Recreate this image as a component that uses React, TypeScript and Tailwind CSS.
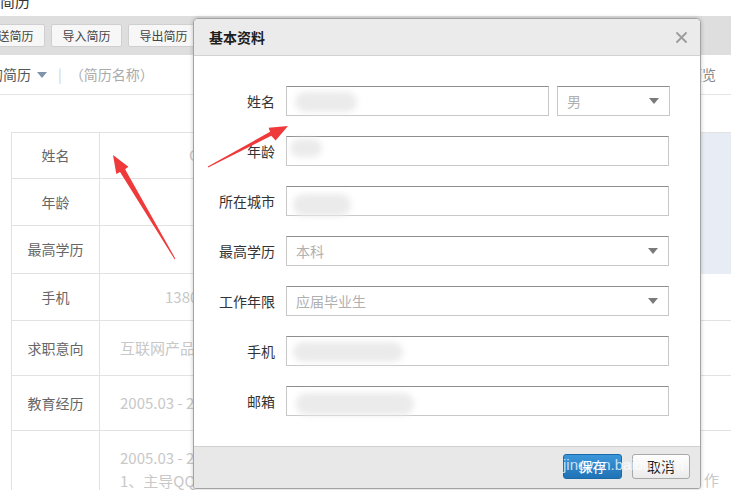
import React from "react";

const cjk = "font-['Microsoft_YaHei','Noto_Sans_CJK_SC',sans-serif]";

function Caret() {
  return (
    <svg width="10" height="6" viewBox="0 0 10 6" className="shrink-0">
      <path d="M0 0h10L5 6z" fill="#7a7a7a" />
    </svg>
  );
}

function Smudge({ className }: { className: string }) {
  return <div className={`absolute rounded-full bg-[#ebebeb] blur-[3px] ${className}`} />;
}

function Field({ children, className = "" }: { children?: React.ReactNode; className?: string }) {
  return (
    <div
      className={`relative h-[30px] border border-[#c8c8c8] border-t-[#8e8e8e] bg-white flex items-center ${className}`}
    >
      {children}
    </div>
  );
}

function SelectField({ value, className = "" }: { value: string; className?: string }) {
  return (
    <Field className={`pl-[9px] pr-[10px] justify-between ${className}`}>
      <span className="text-[14px] text-[#b0b0b0]">{value}</span>
      <Caret />
    </Field>
  );
}

function Row({ label, children }: { label: string; children: React.ReactNode }) {
  return (
    <div className="flex items-center h-[30px]">
      <div className="w-[81px] shrink-0 text-right text-[14px] text-[#333]">{label}</div>
      <div className="ml-[11px] flex-1 flex gap-[8px]">{children}</div>
    </div>
  );
}

const tableRows: { label: string; value?: string; pad?: string; h: string }[] = [
  { label: "姓名", value: "Chen", pad: "pl-[89px]", h: "h-[46px]" },
  { label: "年龄", h: "h-[47px]" },
  { label: "最高学历", h: "h-[48px]" },
  { label: "手机", value: "13800000000", pad: "pl-[65px]", h: "h-[47px]" },
  { label: "求职意向", value: "互联网产品经理", pad: "pl-[20px]", h: "h-[55px]" },
  { label: "教育经历", value: "2005.03 - 2009.06 北京大学", pad: "pl-[20px]", h: "h-[55px]" },
];

export default function App() {
  return (
    <div className={`relative w-[731px] h-[490px] overflow-hidden bg-white ${cjk}`}>
      {/* page heading, scrolled partly out of view */}
      <div className="h-[16px] overflow-hidden">
        <div className="-mt-[9px] text-[15px] leading-[20px] text-[#333]">简历</div>
      </div>

      {/* toolbar */}
      <div className="h-[39px] bg-[#dedede] flex items-start pt-[8px] gap-[6px] -ml-[26px]">
        {["发送简历", "导入简历", "导出简历", "打印简历"].map((t) => (
          <div
            key={t}
            className="w-[71px] h-[23px] flex items-center justify-center rounded-[2px] border border-[#cfcfcf] bg-[#f7f7f7] text-[12px] text-[#444]"
          >
            {t}
          </div>
        ))}
      </div>

      {/* resume switcher */}
      <div className="h-[40px] border-b border-[#e4e4e4] flex items-center text-[14px]">
        <span className="-ml-[25px] text-[#555]">我的简历</span>
        <svg width="10" height="6" viewBox="0 0 10 6" className="ml-[6px]">
          <path d="M0 0h10L5 6z" fill="#7f93ab" />
        </svg>
        <span className="ml-[11px] text-[#d0d0d0]">|</span>
        <span className="ml-[8px] text-[#aaa]">（简历名称）</span>
        <span className="ml-auto mr-[15px] text-[#888]">预览</span>
      </div>

      {/* resume table */}
      <div className="mt-[37px] ml-[11px] w-[760px] border-t border-l border-[#e2e2e2] flex">
        <div className="w-[689px] shrink-0">
          {tableRows.map((r) => (
            <div key={r.label} className={`flex border-b border-[#e2e2e2] ${r.h}`}>
              <div className="w-[88px] shrink-0 border-r border-[#e2e2e2] flex items-center justify-center text-[14px] text-[#666]">
                {r.label}
              </div>
              <div className={`flex-1 flex items-center text-[15px] text-[#c8c8c8] ${r.pad ?? ""}`}>
                {r.value}
              </div>
            </div>
          ))}
          <div className="flex h-[70px]">
            <div className="w-[88px] shrink-0 border-r border-[#e2e2e2]" />
            <div className="flex-1 pl-[20px] pt-[15px] text-[15px] leading-[23px] text-[#c8c8c8]">
              <div>2005.03 - 2009.06</div>
              <div>1、主导QQ空间产品改版</div>
            </div>
          </div>
        </div>
        <div className="flex-1">
          <div className="h-[141px] bg-[#e8ecf4]" />
          <div className="h-[47px] border-b border-[#e2e2e2]" />
          <div className="h-[55px] border-b border-[#e2e2e2]" />
          <div className="h-[55px] border-b border-[#e2e2e2]" />
          <div className="pt-[38px] pl-[3px] text-[15px] text-[#c8c8c8]">作</div>
        </div>
      </div>

      {/* 基本资料 dialog */}
      <div className="absolute left-[193px] top-[18px] w-[508px] h-[471px] flex flex-col border border-[#a3a3a3] rounded-t-[5px] rounded-b-[3px] bg-white shadow-[0_0_4px_rgba(0,0,0,0.22)] overflow-hidden">
        <div className="h-[37px] shrink-0 bg-[#ebebeb] border-b border-[#d2d2d2] flex items-center pl-[15px] pr-[13px]">
          <span className="text-[14px] font-bold text-[#1e1e1e]">基本资料</span>
          <svg width="11" height="11" viewBox="0 0 11 11" className="ml-auto">
            <path d="M1 1l9 9M10 1l-9 9" stroke="#9c9c9c" strokeWidth="1.8" strokeLinecap="round" />
          </svg>
        </div>

        <div className="flex-1 flex flex-col gap-[20px] pt-[30px] pr-[31px]">
          <Row label="姓名">
            <Field className="w-[263px]">
              <Smudge className="left-[8px] top-[5px] w-[62px] h-[20px]" />
            </Field>
            <SelectField value="男" className="w-[113px]" />
          </Row>
          <Row label="年龄">
            <Field className="flex-1">
              <Smudge className="left-[3px] top-[2px] w-[32px] h-[18px]" />
            </Field>
          </Row>
          <Row label="所在城市">
            <Field className="flex-1">
              <Smudge className="left-[6px] top-[7px] w-[58px] h-[22px]" />
            </Field>
          </Row>
          <Row label="最高学历">
            <SelectField value="本科" className="flex-1" />
          </Row>
          <Row label="工作年限">
            <SelectField value="应届毕业生" className="flex-1" />
          </Row>
          <Row label="手机">
            <Field className="flex-1">
              <Smudge className="left-[6px] top-[5px] w-[110px] h-[20px]" />
            </Field>
          </Row>
          <Row label="邮箱">
            <Field className="flex-1">
              <Smudge className="left-[9px] top-[6px] w-[118px] h-[22px]" />
            </Field>
          </Row>
        </div>

        <div className="h-[42px] shrink-0 bg-[#e8e8e8] border-t border-[#d0d0d0] flex justify-end items-start pt-[7px] pr-[10px] gap-[10px]">
          <div className="w-[59px] h-[25px] rounded-[3px] border border-[#1b69a6] bg-gradient-to-b from-[#3b97da] to-[#1f73b6] flex items-center justify-center text-[14px] text-white">
            保存
          </div>
          <div className="w-[58px] h-[25px] rounded-[3px] border border-[#a9a9a9] bg-gradient-to-b from-white to-[#ebebeb] flex items-center justify-center text-[14px] text-[#222]">
            取消
          </div>
        </div>
      </div>

      {/* site watermark */}
      <div className="absolute left-[563px] top-[455px] text-[15px] leading-[20px] text-white/75 font-['Liberation_Sans',sans-serif] pointer-events-none">
        jingyan.baidu.com
      </div>

      {/* red annotation arrows */}
      <svg className="absolute inset-0 pointer-events-none" width="731" height="490" viewBox="0 0 731 490">
        <polygon
          points="175.4,258.7 125.1,169.2 128.4,166.7 113,155 116.3,174.1 120.0,172.0 174.6,259.3"
          fill="#ee3a3a"
        />
        <polygon
          points="208.2,167.6 271.3,135.8 275.6,140.6 288,126 268.6,127.8 270.1,131.8 207.8,166.4"
          fill="#ee3a3a"
        />
      </svg>
    </div>
  );
}
